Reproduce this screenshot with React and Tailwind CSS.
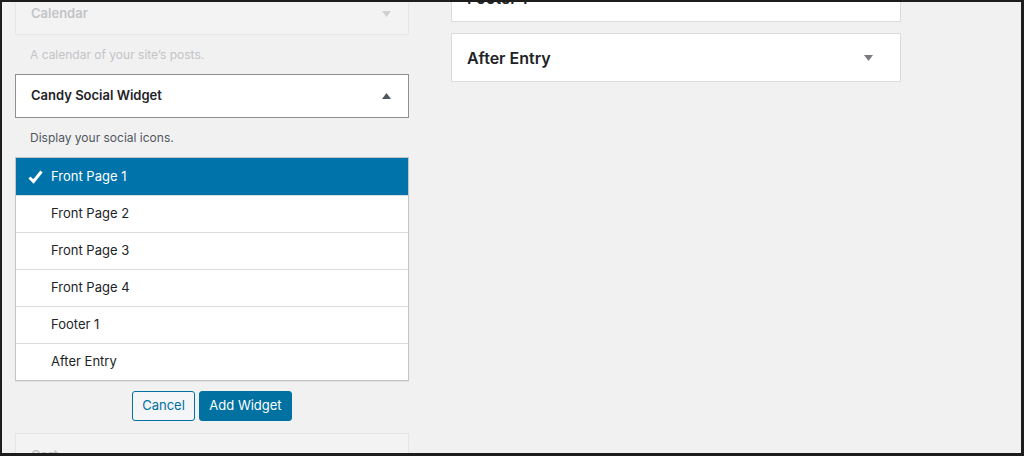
import React from 'react';

const font = { fontFamily: 'Inter, "Noto Sans", sans-serif' };

function Arrow({ up = false, className = '' }) {
  return (
    <svg width="9" height="6" viewBox="0 0 9 6" className={className}>
      {up ? (
        <polygon points="0,6 9,6 4.5,0" fill="currentColor" />
      ) : (
        <polygon points="0,0 9,0 4.5,6" fill="currentColor" />
      )}
    </svg>
  );
}

function Check() {
  return (
    <svg width="15" height="14" viewBox="0 0 15 14" className="text-white">
      <path d="M1.5 7.5 L5.5 11.5 L13.5 1.5" fill="none" stroke="currentColor" strokeWidth="3" strokeLinejoin="miter" />
    </svg>
  );
}

const areas = ['Front Page 1', 'Front Page 2', 'Front Page 3', 'Front Page 4', 'Footer 1', 'After Entry'];

export default function App() {
  return (
    <div
      style={font}
      className="flex h-[456px] w-[1024px] overflow-hidden border-t-2 border-r-[3px] border-b-[3px] border-l-2 border-[#1d1d1d] bg-[#f1f1f1]"
    >
      {/* available widgets column */}
      <div className="ml-[13px] flex w-[394px] shrink-0 flex-col">
        <div className="-mt-[13px] flex h-[46px] shrink-0 items-center justify-between border border-[#e6e6e6] bg-[#f3f3f3] pt-[4px] pl-[15px] pr-[17px]">
          <span className="text-[13px] font-semibold text-[#c3c4c7]">Calendar</span>
          <Arrow className="text-[#d0d0d0]" />
        </div>
        <p className="py-[10px] pl-[15px] text-[12px] leading-[19px] text-[#c3c4c7]">
          A calendar of your site’s posts.
        </p>

        <div className="flex h-[44px] shrink-0 items-center justify-between border border-[#8c8f94] bg-white pl-[15px] pr-[17px]">
          <span className="text-[13px] font-semibold text-[#1d2327]">Candy Social Widget</span>
          <Arrow up className="text-[#50575e]" />
        </div>
        <p className="py-[10px] pl-[15px] text-[12px] leading-[19px] text-[#50575e]">
          Display your social icons.
        </p>

        <ul className="border border-[#c3c4c7] bg-white shadow-[0_1px_1px_rgba(0,0,0,0.06)]">
          {areas.map((name, i) => (
            <li
              key={name}
              className={
                i === 0
                  ? 'flex h-[37px] items-center bg-[#0073aa] text-[13px] text-white'
                  : 'flex h-[37px] items-center border-t border-[#dcdcde] text-[13px] text-[#1d2327]'
              }
            >
              <span className="flex w-[35px] justify-center pl-[4px]">{i === 0 && <Check />}</span>
              <span>{name}</span>
            </li>
          ))}
        </ul>

        <div className="mt-[10px] flex justify-center gap-[4px]">
          <button className="h-[30px] w-[63px] rounded-[3px] border border-[#0071a1] bg-[#f3f5f6] text-[13px] text-[#0071a1]">
            Cancel
          </button>
          <button className="h-[30px] w-[93px] rounded-[3px] border border-[#0071a1] bg-[#0071a1] text-[13px] text-white">
            Add Widget
          </button>
        </div>

        <div className="mt-[12px] flex h-[46px] shrink-0 items-center justify-between border border-[#e6e6e6] bg-[#f3f3f3] pl-[15px] pr-[17px]">
          <span className="text-[13px] font-semibold text-[#c3c4c7]">Cart</span>
          <Arrow className="text-[#d0d0d0]" />
        </div>
      </div>

      {/* sidebars column */}
      <div className="ml-[42px] flex w-[450px] shrink-0 flex-col gap-[11px]">
        <div className="-mt-[29px] flex h-[49px] shrink-0 items-center justify-between border border-[#dcdcde] bg-white pl-[15px] pr-[27px]">
          <span className="text-[16px] font-semibold text-[#1d2327]">Footer 1</span>
          <Arrow className="text-[#787c82]" />
        </div>
        <div className="flex h-[49px] shrink-0 items-center justify-between border border-[#dcdcde] bg-white pl-[15px] pr-[27px]">
          <span className="text-[16px] font-semibold text-[#1d2327]">After Entry</span>
          <Arrow className="text-[#787c82]" />
        </div>
      </div>
    </div>
  );
}
